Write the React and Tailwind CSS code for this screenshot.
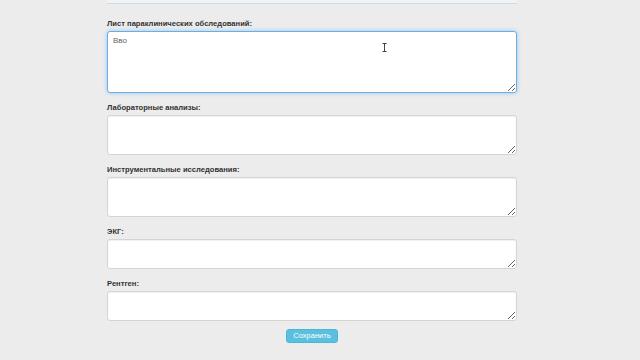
import React from "react";

const fields = [
  { label: "Лист параклинических обследований:", h: "h-[62px]", value: "Вво", focus: true },
  { label: "Лабораторные анализы:", h: "h-[40px]" },
  { label: "Инструментальные исследования:", h: "h-[40px]" },
  { label: "ЭКГ:", h: "h-[30px]" },
  { label: "Рентген:", h: "h-[30px]" },
];

export default function App() {
  return (
    <div className="min-h-[360px] bg-[#ececec] font-['Liberation_Sans',Arial,sans-serif]">
      <div className="ml-[107px] w-[410px]">
        <div className="h-[4px] bg-[#f3f3f3] border-b border-[#c9dbe6]" />
        {fields.map((f, i) => (
          <div key={i} className={i === 0 ? "mt-[13px]" : "mt-[8px]"}>
            <label className="block text-[7.6px] leading-[14px] font-bold text-[#333]">
              {f.label}
            </label>
            <div className="relative">
              <textarea
                defaultValue={f.value || ""}
                className={`block w-full ${f.h} rounded-[3px] bg-white px-[5px] py-[3px] text-[8px] leading-[12px] text-[#666] outline-none border ${
                  f.focus
                    ? "border-[#66afe9] shadow-[0_0_4px_rgba(102,175,233,0.6)]"
                    : "border-[#d4d4d4] shadow-[inset_0_1px_1px_rgba(0,0,0,0.06)]"
                }`}
              />
              {f.focus && (
                <svg
                  className="absolute left-[275px] top-[12px] pointer-events-none"
                  width="5"
                  height="9"
                  viewBox="0 0 5 9"
                >
                  <path d="M0.5 0.5h4M2.5 0.5v8M0.5 8.5h4" stroke="#444" strokeWidth="1" fill="none" />
                </svg>
              )}
            </div>
          </div>
        ))}
        <div className="mt-[8px] flex justify-center">
          <button className="w-[52px] h-[14px] rounded-[3px] bg-[#5bc0de] border border-[#46b8da] text-white text-[7.5px] leading-none">
            Сохранить
          </button>
        </div>
      </div>
    </div>
  );
}
